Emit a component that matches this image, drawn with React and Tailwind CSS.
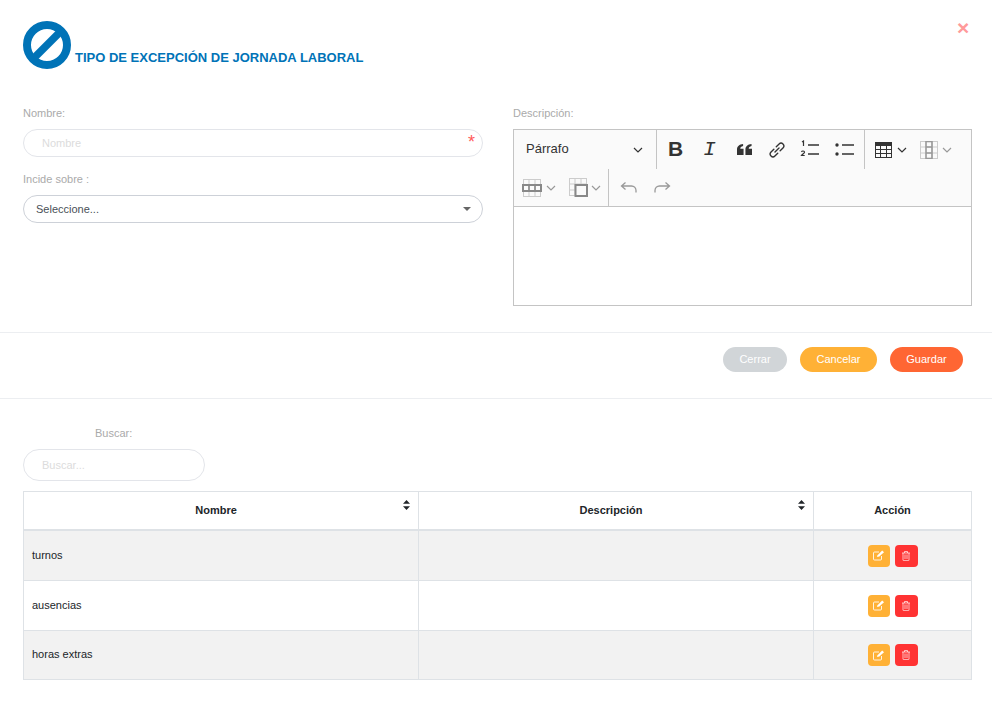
import React from "react";

const ProhibitedIcon = () => (
  <svg width="48" height="48" viewBox="0 0 48 48" className="shrink-0">
    <circle cx="24" cy="24" r="20" fill="none" stroke="#0073b7" strokeWidth="8" />
    <line x1="11" y1="37" x2="37" y2="11" stroke="#0073b7" strokeWidth="7.5" />
  </svg>
);

const Chevron = ({ color = "#333", size = 10 }) => (
  <svg width={size} height={size} viewBox="0 0 10 10" className="shrink-0">
    <path d="M1 3l4 4 4-4" fill="none" stroke={color} strokeWidth="1.2" />
  </svg>
);

const TableGlyph = ({ kind }) => {
  const c = kind === "full" ? "#333" : "#aaa";
  const dark = "#999";
  if (kind === "row") {
    return (
      <svg width="20" height="18" viewBox="0 0 20 18" className="shrink-0">
        <rect x="1.500" y="0.500" width="17" height="17" fill="none" stroke="#ccc" />
        <path d="M7 0.500v17M13 0.500v17M1.500 12h17" stroke="#ccc" fill="none" />
        <rect x="1" y="6" width="18" height="6" fill="none" stroke="#888" strokeWidth="2" />
        <path d="M7 6v6M13 6v6" stroke="#888" strokeWidth="1.600" fill="none" />
      </svg>
    );
  }
  if (kind === "merge") {
    return (
      <svg width="19" height="19" viewBox="0 0 19 19" className="shrink-0">
        <rect x="0.500" y="0.500" width="17" height="17" fill="none" stroke="#ccc" />
        <path d="M6 0.500v17M12 0.500v6M0.500 6h17M0.500 12h6" stroke="#ccc" fill="none" />
        <rect x="6.500" y="7" width="11.500" height="11" fill="#fafafa" stroke="#888" strokeWidth="2" />
      </svg>
    );
  }
  return (
    <svg width="18" height="18" viewBox="0 0 18 18" className="shrink-0">
      {kind === "full" && (
        <>
          <rect x="0.500" y="1.500" width="16" height="15" fill="none" stroke={c} />
          <rect x="0.500" y="1.500" width="16" height="3.500" fill={c} />
          <path d="M0.500 8.500h16M0.500 12.500h16M5.500 5v11M11.500 5v11" stroke={c} fill="none" />
        </>
      )}
      {kind === "col" && (
        <>
          <rect x="0.500" y="0.500" width="17" height="17" fill="none" stroke="#ccc" />
          <path d="M0.500 6h17M0.500 12h17M12 0.500v17" stroke="#ccc" fill="none" />
          <rect x="6" y="0.500" width="6" height="17" fill="none" stroke={dark} strokeWidth="1.600" />
          <path d="M6 6h6M6 12h6" stroke={dark} strokeWidth="1.600" fill="none" />
        </>
      )}
    </svg>
  );
};

const Toolbar = () => (
  <div className="bg-[#fafafa] border-b border-[#c4c4c4]">
    <div className="flex h-[39px]">
      <div className="w-[143px] border-r border-[#c4c4c4] flex items-center justify-between pl-[12px] pr-[13px] text-[13px] text-[#333] h-[39px]">
        <span className="-mt-[1px]">Párrafo</span>
        <Chevron size={10} />
      </div>
      <div className="w-[208px] border-r border-[#c4c4c4] relative flex items-center text-[#333]">
        <span className="w-[37px] text-center text-[21px] font-bold leading-none -mt-[2px]">B</span>
        <span className="w-[31px] text-center text-[21px] italic leading-none -mt-[1px] font-['Liberation_Mono',monospace]">I</span>
        <svg width="15" height="11" viewBox="0 1 16 13" preserveAspectRatio="none" className="ml-[12px]">
          <path d="M0 14V7.500C0 3.500 2.500 1.500 6.500 1v2.500C4.500 4 3.500 5 3.500 6.500H7V14zM9 14V7.500C9 3.500 11.500 1.500 15.500 1v2.500c-2 .5-3 1.500-3 3H16V14z" fill="#333" />
        </svg>
        <svg width="16" height="16" viewBox="0 0 14 14" className="ml-[17px] mt-[1px]" fill="none" stroke="#333" strokeWidth="1.200" strokeLinecap="round">
          <g transform="rotate(45 7 7)">
            <path d="M4.600 5.500V2a2.400 2.400 0 0 1 4.800 0v3.500" />
            <path d="M4.600 8.500V12a2.400 2.400 0 0 0 4.800 0V8.500" />
            <path d="M7 4.500v5" />
          </g>
        </svg>
        <svg width="20" height="18" viewBox="0 0 20 18" className="ml-[15px] -mt-[2px]">
          <path d="M8 5h11M8 14h11" stroke="#333" strokeWidth="1.500" />
          <path d="M2 2l1.500-1v5" stroke="#333" strokeWidth="1.200" fill="none" />
          <path d="M1.500 12c.5-1.500 3-1.200 3 .2 0 1-2 2-3 3.300h3.200" stroke="#333" strokeWidth="1.200" fill="none" />
        </svg>
        <svg width="20" height="18" viewBox="0 0 20 18" className="ml-[14px] -mt-[2px]">
          <circle cx="3" cy="5" r="1.700" fill="#333" />
          <circle cx="3" cy="14" r="1.700" fill="#333" />
          <path d="M8 5h12M8 14h12" stroke="#333" strokeWidth="1.500" />
        </svg>
      </div>
      <div className="flex items-center pl-[10px] gap-[2px]">
        <TableGlyph kind="full" />
        <span className="ml-[2px]"><Chevron /></span>
        <span className="ml-[11px]"><TableGlyph kind="col" /></span>
        <span className="ml-[2px]"><Chevron color="#999" /></span>
      </div>
    </div>
    <div className="flex h-[37px]">
      <div className="w-[95px] flex items-center pl-[8px] border-r border-[#c4c4c4]">
        <TableGlyph kind="row" />
        <span className="ml-[4px]"><Chevron color="#999" /></span>
        <span className="ml-[13px]"><TableGlyph kind="merge" /></span>
        <span className="ml-[3px]"><Chevron color="#999" /></span>
      </div>
      <div className="flex items-center pl-[11px]">
        <svg width="18" height="14" viewBox="0 0 18 14" fill="none" stroke="#999" strokeWidth="1.300">
          <path d="M5.500 1.500L1.500 5l4 3.500M1.500 5h10a4.500 4.500 0 0 1 4.500 4.500v2" />
        </svg>
        <svg width="18" height="14" viewBox="0 0 18 14" className="ml-[15px] -scale-x-100" fill="none" stroke="#999" strokeWidth="1.300">
          <path d="M5.500 1.500L1.500 5l4 3.500M1.500 5h10a4.500 4.500 0 0 1 4.500 4.500v2" />
        </svg>
      </div>
    </div>
  </div>
);

const SortArrows = () => (
  <svg width="7" height="10" viewBox="0 0 7 10" className="absolute top-[8px] right-[8px]">
    <path d="M3.500 0L7 3.800H0zM3.500 10L0 6.200h7z" fill="#212529" />
  </svg>
);

const EditIcon = () => (
  <svg width="12" height="11" viewBox="0 0 12 11" fill="none" stroke="#fff" strokeOpacity="0.85" strokeWidth="1">
    <path d="M8.500 6v3a1 1 0 0 1-1 1h-6a1 1 0 0 1-1-1V3a1 1 0 0 1 1-1H6" />
    <path d="M4 7l.5-1.800L9.200.6l1.800 1.600-4.700 4.400z" fill="#fff" stroke="none" />
  </svg>
);

const TrashIcon = () => (
  <svg width="8" height="10" viewBox="0 0 8 10" fill="none" stroke="#fff" strokeOpacity="0.85" strokeWidth="0.8">
    <path d="M0 2h8M2.500 2V.5h3V2M1 2v7a.6.6 0 0 0 .6.6h4.800A.6.6 0 0 0 7 9V2M3 3.500v4.500M5 3.500v4.500" />
  </svg>
);

const rows = [
  { name: "turnos", cls: "h-[50px] bg-[#f2f2f2]", pt: "pt-[18px]" },
  { name: "ausencias", cls: "h-[50px]", pt: "pt-[18px]" },
  { name: "horas extras", cls: "h-[49px] bg-[#f2f2f2]", pt: "pt-[17px]" },
];

export default function App() {
  return (
    <div className="w-[993px] h-[715px] bg-white overflow-hidden relative font-['Liberation_Sans',Arial,sans-serif]">
      {/* encabezado */}
      <div className="flex items-end pl-[23px] pt-[21px] h-[69px]">
        <ProhibitedIcon />
        <h1 className="ml-[4px] text-[13px] font-bold text-[#0073b7] leading-[15px] mb-[4px]">TIPO DE EXCEPCIÓN DE JORNADA LABORAL</h1>
      </div>
      <span className="absolute top-[17px] left-[957px] text-[21px] leading-[22px] font-bold text-[#ff9a9a]">×</span>

      {/* formulario */}
      <div className="flex pl-[23px] pt-[38px] h-[264px] border-b border-[#eceef1] w-[992px]">
        <div className="w-[460px]">
          <label className="block text-[11px] leading-[13px] text-[#aaa]">Nombre:</label>
          <div className="relative mt-[9px] h-[28px] border border-[#e3e5ea] rounded-full flex items-center pl-[18px] text-[11px] text-[#dcdcdc]">
            Nombre
            <span className="absolute right-[7px] top-[3px] text-[18px] leading-[18px] text-[#ff5a5a]">*</span>
          </div>
          <label className="block mt-[16px] text-[11px] leading-[13px] text-[#aaa]">Incide sobre :</label>
          <div className="relative mt-[9px] h-[28px] border border-[#cdd1d8] rounded-full flex items-center pl-[12px] text-[11px] text-[#495057]">
            Seleccione...
            <span className="absolute right-[11px] top-[11px] border-x-[4px] border-x-transparent border-t-[4px] border-t-[#666]" />
          </div>
        </div>
        <div className="ml-[30px] w-[459px]">
          <label className="block text-[11px] leading-[13px] text-[#aaa]">Descripción:</label>
          <div className="mt-[9px] h-[177px] border border-[#c4c4c4] bg-white">
            <Toolbar />
          </div>
        </div>
      </div>

      {/* botones */}
      <div className="flex justify-end pt-[14px] pr-[29px] h-[66px] border-b border-[#eceef1] w-[992px] gap-[13px] text-[11px] text-white">
        <button className="h-[25px] w-[64px] rounded-full bg-[#d1d5d8]">Cerrar</button>
        <button className="h-[25px] w-[77px] rounded-full bg-[#ffb136]">Cancelar</button>
        <button className="h-[25px] w-[73px] rounded-full bg-[#ff6633]">Guardar</button>
      </div>

      {/* listado */}
      <div className="pl-[23px] pt-[28px] w-[972px]">
        <label className="block pl-[72px] text-[11px] leading-[13px] text-[#aaa]">Buscar:</label>
        <div className="mt-[9px] w-[182px] h-[32px] border border-[#e3e5ea] rounded-full flex items-center pl-[18px] text-[11px] text-[#dcdcdc]">Buscar...</div>
        <div className="mt-[10px] grid grid-cols-[395px_395px_157px] border border-[#dee2e6] border-b-0 text-[11px] text-[#212529]">
          <div className="relative h-[39px] border-b-[2px] border-[#dee2e6] border-r flex items-center justify-center font-bold pr-[10px]">Nombre<SortArrows /></div>
          <div className="relative h-[39px] border-b-[2px] border-[#dee2e6] border-r flex items-center justify-center font-bold pr-[10px]">Descripción<SortArrows /></div>
          <div className="h-[39px] border-b-[2px] border-[#dee2e6] flex items-center justify-center font-bold">Acción</div>
          {rows.map((r) => (
            <React.Fragment key={r.name}>
              <div className={`${r.cls} ${r.pt} border-r border-b border-[#dee2e6] pl-[8px] leading-[13px]`}>{r.name}</div>
              <div className={`${r.cls} border-r border-b border-[#dee2e6]`} />
              <div className={`${r.cls} border-b border-[#dee2e6] flex items-center justify-center gap-[5px]`}>
                <span className="w-[22px] h-[22px] rounded-[4px] bg-[#ffb136] flex items-center justify-center"><EditIcon /></span>
                <span className="w-[23px] h-[22px] rounded-[4px] bg-[#ff3333] flex items-center justify-center"><TrashIcon /></span>
              </div>
            </React.Fragment>
          ))}
        </div>
      </div>
    </div>
  );
}
